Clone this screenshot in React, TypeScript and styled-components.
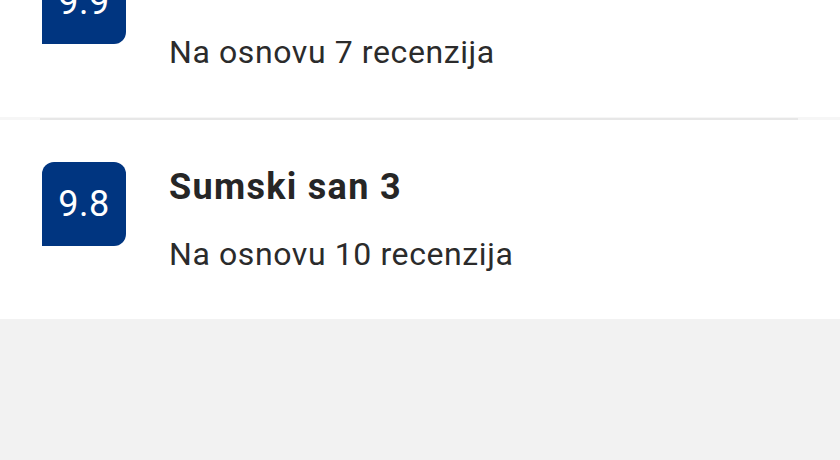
import * as React from 'react';
import styled, { createGlobalStyle } from 'styled-components';

const GlobalStyle = createGlobalStyle`
  html, body {
    margin: 0;
    padding: 0;
    background: #f2f2f2;
    font-family: Roboto, "Liberation Sans", Arial, sans-serif;
    overflow: hidden;
  }
`;

const Page = styled.div`
  width: 840px;
  height: 460px;
  overflow: hidden;
  background: #f2f2f2;
`;

// the list is scrolled, so the first card starts above the window
const List = styled.ul`
  list-style: none;
  margin: -82px 0 0;
  padding: 0;
  background: #ffffff;
`;

const Item = styled.li`
  display: flex;
  align-items: flex-start;
  gap: 43px;
  height: 199px;
  box-sizing: border-box;
  padding: 42px 42px 0;
`;

const Divider = styled.li`
  height: 3px;
  background: #f6f6f6;
  display: flex;
  align-items: center;
  padding: 0 42px 0 40px;

  &::after {
    content: '';
    flex: 1;
    height: 2px;
    background: #e7e7e7;
  }
`;

const Badge = styled.div`
  flex: none;
  width: 84px;
  height: 84px;
  background: #003580;
  color: #ffffff;
  border-radius: 12px 12px 12px 0;
  display: flex;
  align-items: center;
  justify-content: center;
  font-size: 36px;
  letter-spacing: 0.5px;
  padding-bottom: 1px;
  box-sizing: border-box;
`;

const Info = styled.div`
  display: flex;
  flex-direction: column;
  padding-top: 6px;
`;

const Title = styled.div`
  font-size: 36px;
  font-weight: 700;
  letter-spacing: 1.3px;
  color: #262626;
  line-height: 38px;
`;

const Reviews = styled.div`
  margin-top: 30px;
  font-size: 32px;
  letter-spacing: 0.6px;
  color: #2b2b2b;
  line-height: 36px;
`;

const hotels = [
  { score: '9.9', name: 'Sumski san 4', reviews: 7 },
  { score: '9.8', name: 'Sumski san 3', reviews: 10 },
];

export default function App() {
  return (
    <Page>
      <GlobalStyle />
      <List>
        {hotels.map((h, i) => (
          <React.Fragment key={h.name}>
            {i > 0 && <Divider />}
            <Item>
              <Badge>{h.score}</Badge>
              <Info>
                <Title>{h.name}</Title>
                <Reviews>Na osnovu {h.reviews} recenzija</Reviews>
              </Info>
            </Item>
          </React.Fragment>
        ))}
      </List>
    </Page>
  );
}
